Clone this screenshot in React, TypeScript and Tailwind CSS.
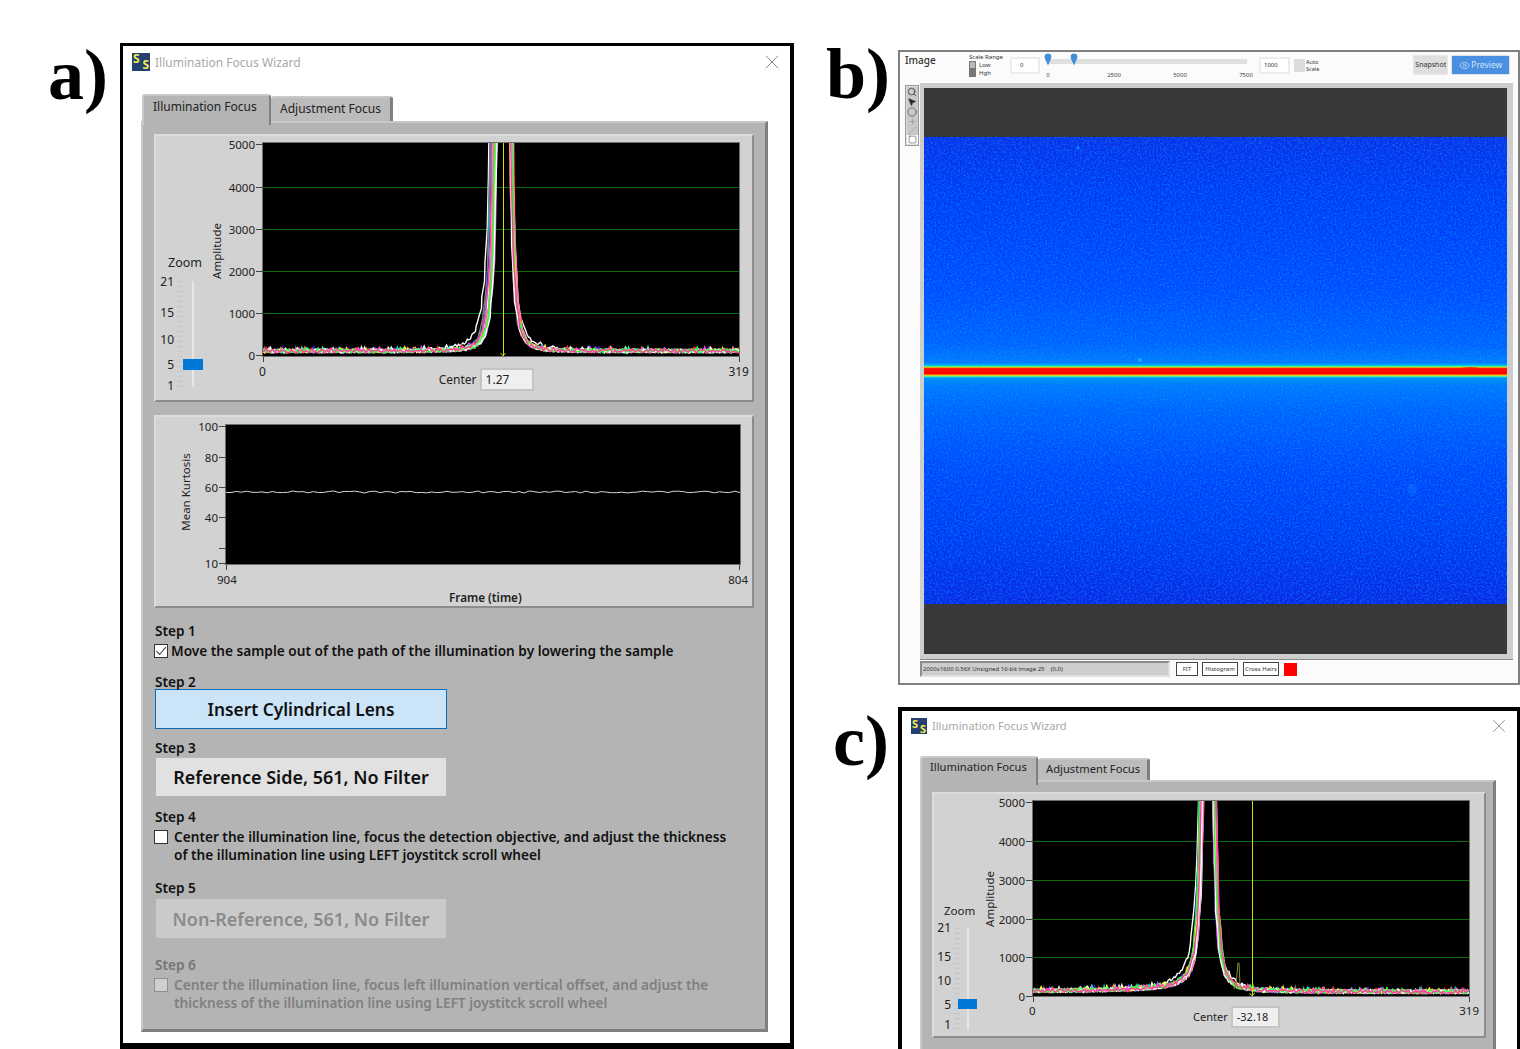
import { Circle, Eye, MousePointer2, Plus, Search, Slash, Square, X } from "lucide-react";

type PeakOpts = {
  seed: number;
  w: number;
  h: number;
  baseY: number;
  scale: number;
  leftFlanks: number[];
  rightFlanks: number[];
  tail: number;
};

const colors = ["#ffffff", "#00c8c8", "#808080", "#2a2aff", "#a050ff", "#00c8ff", "#ff2a2a", "#ff9020", "#ff40ff", "#ffffff", "#ffff30", "#40ff90", "#ff6fa8", "#ffffff", "#30ff30", "#ff40a0"];

function rng(seed: number) {
  let a = seed;
  return () => {
    a = (a + 0x6d2b79f5) | 0;
    let t = Math.imul(a ^ (a >>> 15), 1 | a);
    t = (t + Math.imul(t ^ (t >>> 7), 61 | t)) ^ t;
    return ((t ^ (t >>> 14)) >>> 0) / 4294967296;
  };
}

function peakCurves(o: PeakOpts) {
  return colors.map((color, n) => {
    const r = rng(o.seed + n * 31);
    const cL = o.leftFlanks[n % o.leftFlanks.length] + 8;
    const cR = o.rightFlanks[n % o.rightFlanks.length] - 8;
    const p = n === 0 ? 2.3 : 2.9;
    const k = 5000 * Math.pow(8, p);
    const pts: string[] = [];
    for (let i = 0; i <= 319; i++) {
      const x = (i * o.w) / 319;
      let v = 9000;
      if (x < cL) v = k / Math.pow(cL - x, p) + o.tail / (cL - x);
      else if (x > cR) v = k / Math.pow(x - cR, p) + (o.tail * 0.3) / (x - cR);
      const spike = r() > 0.95 ? 2.4 : 0;
      const y = o.baseY - Math.min(v, 9000) * o.scale + (r() - 0.5) * 3.6 - spike;
      // flanks wobble sideways a little, as the sampled traces do
      const px = v > 400 ? x + (r() - 0.5) * 1.4 : x;
      pts.push(`${px.toFixed(1)},${y.toFixed(1)}`);
    }
    return { color, points: pts.join(" ") };
  });
}

const curvesA = peakCurves({ seed: 11, w: 476, h: 213, baseY: 208, scale: 0.0426, leftFlanks: [226, 228, 227, 229, 230, 231, 232, 233, 234, 230, 232, 233, 231, 234, 232, 229], rightFlanks: [248, 249, 247, 250, 248, 249, 250, 247, 248, 250, 249, 248, 250, 247, 249, 248], tail: 0 });
const curvesC = peakCurves({ seed: 47, w: 436, h: 195, baseY: 191, scale: 0.039, leftFlanks: [166, 168, 169, 167, 170, 171, 169, 168, 170, 171, 168, 169, 171, 170, 167, 169], rightFlanks: [180, 181, 182, 180, 183, 182, 181, 183, 180, 182, 181, 183, 182, 180, 181, 183], tail: 5400 });

function kurtosisLine() {
  const r = rng(5);
  const pts: string[] = [];
  for (let i = 0; i <= 100; i++) {
    pts.push(`${((i * 514) / 100).toFixed(1)},${(67 + (r() - 0.5) * 2).toFixed(1)}`);
  }
  return pts.join(" ");
}
const kurtosisPoints = kurtosisLine();

type Tick = { label: string; y: number };

function AxisPlot({
  width,
  height,
  left,
  top,
  plotW,
  plotH,
  ticks,
  axisLabel,
  axisX,
  axisY,
  xTicks,
  textClass,
  children,
}: {
  width: number;
  height: number;
  left: number;
  top: number;
  plotW: number;
  plotH: number;
  ticks: Tick[];
  axisLabel: string;
  axisX: number;
  axisY: number;
  xTicks: number[];
  textClass: string;
  children: React.ReactNode;
}) {
  return (
    <svg width={width} height={height} className="block shrink-0">
      <rect x={left} y={top} width={plotW} height={plotH} fill="#000" />
      <rect x={left - 0.5} y={top - 0.5} width={plotW + 1} height={plotH + 1} fill="none" stroke="#6e6e6e" />
      {ticks.map((t) => (
        <g key={t.label + t.y}>
          <line x1={left - 7} x2={left} y1={t.y} y2={t.y} stroke="#444" shapeRendering="crispEdges" />
          {t.label && (
            <text x={left - 8} y={t.y + 4.5} textAnchor="end" className={textClass}>
              {t.label}
            </text>
          )}
        </g>
      ))}
      {xTicks.map((x) => (
        <line key={x} x1={x} x2={x} y1={top + plotH + 1} y2={top + plotH + 6} stroke="#444" shapeRendering="crispEdges" />
      ))}
      <text transform={`translate(${axisX} ${axisY}) rotate(-90)`} textAnchor="middle" className={textClass}>
        {axisLabel}
      </text>
      <svg x={left} y={top} width={plotW} height={plotH}>
        {children}
      </svg>
    </svg>
  );
}

function Peaks({ curves, w, h, cursor, grid }: { curves: { color: string; points: string }[]; w: number; h: number; cursor: number; grid: number[] }) {
  return (
    <>
      {grid.map((y) => (
        <rect key={y} x={0} y={y} width={w} height={1} fill="#0a6e0a" />
      ))}
      {curves.map((c, i) => (
        <polyline key={i} points={c.points} fill="none" stroke={c.color} strokeWidth={1.4} />
      ))}
      <line x1={cursor} x2={cursor} y1={0} y2={h} stroke="#dcdc00" shapeRendering="crispEdges" />
      <path d={`M${cursor - 2.5} ${h - 3}L${cursor} ${h}L${cursor + 2.5} ${h - 3}`} fill="none" stroke="#d6d600" />
    </>
  );
}

function SSIcon({ className }: { className: string }) {
  return (
    <div className={"flex justify-between bg-[#24406e] px-px font-bold leading-none text-[#f4ec4e] " + className}>
      <span className="self-start">S</span>
      <span className="self-end">S</span>
    </div>
  );
}

function SliderScale({
  labels,
  labelW,
  trackOffset,
  trackH,
  trackMl,
  thumbTop,
  thumbCls,
}: {
  labels: { v: string; cls: string }[];
  labelW: string;
  trackOffset: string;
  trackH: string;
  trackMl: string;
  thumbTop: string;
  thumbCls: string;
}) {
  return (
    <div className="flex">
      <div className={"flex flex-col items-end text-[12px] leading-[14px] text-[#222] " + labelW}>
        {labels.map((l) => (
          <span key={l.v} className={l.cls}>
            {l.v}
          </span>
        ))}
      </div>
      <div className={"ml-[3px] w-[6px] bg-[repeating-linear-gradient(#c6c6c6_0_1px,transparent_1px_5px)] " + trackOffset + " " + trackH} />
      <div className={"relative w-[2px] bg-[#e6e6e6] " + trackOffset + " " + trackH + " " + trackMl}>
        <div className={"absolute bg-[#0078d7] " + thumbTop + " " + thumbCls} />
      </div>
    </div>
  );
}

function Titlebar({ size, iconCls, textCls, closeMr }: { size: number; iconCls: string; textCls: string; closeMr: string }) {
  return (
    <div className="flex items-center pl-[9px]">
      <SSIcon className={iconCls} />
      <span className={"ml-[5px] text-[#a8a8a8] " + textCls}>Illumination Focus Wizard</span>
      <X size={size} strokeWidth={1} className={"-my-[4px] ml-auto text-[#8c8c8c] " + closeMr} />
    </div>
  );
}

const tabActive = "relative z-10 rounded-t-[3px] border-t-2 border-l-2 border-r-2 border-t-[#c8c8c8] border-l-[#c8c8c8] border-r-[#7f7f7f] bg-[#b4b4b4] text-[#222]";
const tabIdle = "rounded-t-[3px] border-t-2 border-r-[3px] border-t-[#c8c8c8] border-r-[#7f7f7f] bg-[#bcbcbc] text-[#222]";
const chartPanel = "shrink-0 border-2 border-t-[#dcdcdc] border-l-[#dcdcdc] border-r-[#8c8c8c] border-b-[#8c8c8c] bg-[#d2d2d2]";
const tabBody = "border-t-2 border-l-2 border-r-[3px] border-t-[#c8c8c8] border-l-[#c8c8c8] border-r-[#7f7f7f] bg-[#b4b4b4]";
const inputBox = "border-2 border-[#c4c4c4] bg-[#efefef] text-[#222]";

function FigureLabel({ text, className }: { text: string; className: string }) {
  return <div className={"font-['Liberation_Serif',serif] text-[72px] leading-none font-bold text-black " + className}>{text}</div>;
}

function CheckBox({ checked, disabled }: { checked?: boolean; disabled?: boolean }) {
  return (
    <div className={"flex h-[14px] w-[14px] shrink-0 items-center justify-center border " + (disabled ? "border-[#8e8e8e] bg-[#cfcfcf]" : "border-[#333] bg-white")}>
      {checked && (
        <svg width="12" height="12" viewBox="0 0 12 12">
          <path d="M1.5 6.2L4.6 9.5L10.8 2.2" fill="none" stroke="#444" strokeWidth="1.1" />
        </svg>
      )}
    </div>
  );
}

function PanelA() {
  return (
    <div className="mt-[43px] h-[1006px] w-[674px] shrink-0 border-t-[3px] border-r-4 border-b-[6px] border-l-[3px] border-black bg-white">
      <div className="pt-[6px]">
        <Titlebar size={24} iconCls="h-[18px] w-[18px] text-[12px]" textCls="mt-[2px] text-[12px]" closeMr="mr-[6px]" />
      </div>
      <div className="ml-[18px] mt-[22px] flex h-[27px] text-[12px]">
        <div className={"ml-px h-[31px] w-[129px] pt-[2px] pl-[9px] " + tabActive}>Illumination Focus</div>
        <div className={"mt-[2px] h-[25px] w-[122px] pt-[2px] pl-[9px] " + tabIdle}>Adjustment Focus</div>
      </div>
      <div className={"ml-[18px] h-[911px] w-[627px] border-b-[3px] border-b-[#7f7f7f] px-[11px] pt-[11px] " + tabBody}>
        <div className={"flex h-[268px] w-[600px] " + chartPanel}>
          <div className="w-[51px] shrink-0">
            <div className="mt-[118px] pl-[12px] text-[12.5px] leading-[18px] text-[#222]">Zoom</div>
            <div className="mt-[2px]">
              <SliderScale
                labels={[
                  { v: "21", cls: "mt-px" },
                  { v: "15", cls: "mt-[17px]" },
                  { v: "10", cls: "mt-[13px]" },
                  { v: "5", cls: "mt-[11px]" },
                  { v: "1", cls: "mt-[7px]" },
                ]}
                labelW="w-[18px]"
                trackOffset="mt-[7px]"
                trackH="h-[106px]"
                trackMl="ml-[9px]"
                thumbTop="top-[78px]"
                thumbCls="-left-[9px] h-[11px] w-[20px]"
              />
            </div>
          </div>
          <div>
            <AxisPlot
              width={541}
              height={227}
              left={56}
              top={7}
              plotW={476}
              plotH={213}
              axisLabel="Amplitude"
              axisX={14}
              axisY={115}
              ticks={[
                { label: "5000", y: 8 },
                { label: "4000", y: 51 },
                { label: "3000", y: 93 },
                { label: "2000", y: 135 },
                { label: "1000", y: 177 },
                { label: "0", y: 219 },
              ]}
              xTicks={[56, 532]}
              textClass="fill-[#222] text-[11.5px]"
            >
              <Peaks curves={curvesA} w={476} h={213} cursor={240} grid={[44, 86, 128, 170]} />
            </AxisPlot>
            <div className="flex w-[542px] justify-between pl-[52px] text-[12px] leading-[18px] text-[#222]">
              <span>0</span>
              <div className="mt-[5px] mr-[22px] flex items-center">
                <span>Center</span>
                <div className={"ml-[3px] h-[23px] w-[54px] pl-[4px] leading-[19px] " + inputBox}>1.27</div>
              </div>
              <span>319</span>
            </div>
          </div>
        </div>
        <div className={"mt-[13px] flex h-[193px] w-[600px] " + chartPanel}>
          <div>
            <AxisPlot
              width={590}
              height={154}
              left={70}
              top={8}
              plotW={514}
              plotH={139}
              axisLabel="Mean Kurtosis"
              axisX={34}
              axisY={75}
              ticks={[
                { label: "100", y: 9 },
                { label: "80", y: 40 },
                { label: "60", y: 70 },
                { label: "40", y: 100 },
                { label: "", y: 131 },
                { label: "10", y: 146 },
              ]}
              xTicks={[70, 583]}
              textClass="fill-[#222] text-[11.5px]"
            >
              <polyline points={kurtosisPoints} fill="none" stroke="#d8d8d8" strokeWidth={1} />
            </AxisPlot>
            <div className="flex w-[592px] justify-between pl-[61px] text-[11.5px] leading-[18px] text-[#222]">
              <span>904</span>
              <span>804</span>
            </div>
            <div className="pl-[293px] text-[11.7px] leading-[16px] font-semibold text-[#222]">Frame (time)</div>
          </div>
        </div>
        <div className="text-[13.65px] leading-[18px] font-semibold text-[#111]">
          <div className="mt-[16px] ml-px leading-[14px]">Step 1</div>
          <div className="mt-[4px] flex items-center gap-[3px]">
            <CheckBox checked />
            <span>Move the sample out of the path of the illumination by lowering the sample</span>
          </div>
          <div className="mt-[15px] ml-px leading-[14px]">Step 2</div>
          <div className="ml-px flex h-[40px] w-[292px] items-center justify-center border-[1.5px] border-[#0a6cbc] bg-[#cce4f7] pt-[2px] text-[17.3px]">Insert Cylindrical Lens</div>
          <div className="mt-[12px] ml-px leading-[14px]">Step 3</div>
          <div className="mt-[3px] ml-[2px] flex h-[38px] w-[290px] items-center justify-center bg-[#e1e1e1] text-[18px]">Reference Side, 561, No Filter</div>
          <div className="mt-[14px] ml-px leading-[14px]">Step 4</div>
          <div className="mt-[4px] flex gap-[6px]">
            <div className="mt-[2px]">
              <CheckBox />
            </div>
            <span>
              Center the illumination line, focus the detection objective, and adjust the thickness
              <br />
              of the illumination line using LEFT joystitck scroll wheel
            </span>
          </div>
          <div className="mt-[17px] ml-px leading-[14px]">Step 5</div>
          <div className="mt-[4px] ml-[2px] flex h-[39px] w-[290px] items-center justify-center bg-[#cacaca] pt-px text-[18px] text-[#8a8a8a]">Non-Reference, 561, No Filter</div>
          <div className="mt-[20px] ml-px leading-[14px] text-[#767676]">Step 6</div>
          <div className="mt-[4px] flex gap-[6px] text-[#808080]">
            <div className="mt-[2px]">
              <CheckBox disabled />
            </div>
            <span>
              Center the illumination line, focus left illumination vertical offset, and adjust the
              <br />
              thickness of the illumination line using LEFT joystitck scroll wheel
            </span>
          </div>
        </div>
      </div>
    </div>
  );
}

const blueStops: [number, string][] = [
  [137, "#0a2ce8"],
  [200, "#0038f8"],
  [290, "#0048ff"],
  [345, "#0060ff"],
  [362, "#0078ff"],
  [365, "#00a8ff"],
  [366, "#00e8d0"],
  [367, "#c0f020"],
  [368, "#ff6000"],
  [368.6, "#ff1000"],
  [374, "#ff0000"],
  [375, "#ffb000"],
  [376, "#a0f050"],
  [377, "#10e0e0"],
  [378, "#0090ff"],
  [385, "#0078ff"],
  [410, "#0060ff"],
  [470, "#0044fc"],
  [540, "#0036f2"],
  [604, "#0a24e4"],
];

function LineImage() {
  return (
    <svg width={583} height={467} className="block">
      <defs>
        <linearGradient id="beam" x1="0" y1="0" x2="0" y2="1">
          {blueStops.map(([y, c]) => (
            <stop key={y} offset={(y - 137) / 467} stopColor={c} />
          ))}
        </linearGradient>
        <filter id="speckle" x="0" y="0" width="100%" height="100%">
          <feTurbulence type="fractalNoise" baseFrequency="0.55" numOctaves="2" seed="4" />
          <feColorMatrix type="matrix" values="0 0 0 0 0  0 0 0 0 0.4  0 0 0 0 1  1.1 0 0 0 -0.42" />
        </filter>
      </defs>
      <rect width={583} height={467} fill="url(#beam)" />
      <rect width={583} height={225} filter="url(#speckle)" />
      <rect y={242} width={583} height={225} filter="url(#speckle)" />
      <circle cx={154} cy={11} r={1.5} fill="#0a90ff" />
      <circle cx={216} cy={223} r={2} fill="#10b0ff" />
      <circle cx={488} cy={352} r={5} fill="#1070ff" opacity={0.5} />
      <path d="M535 231.5Q546 229 558 231.5Z" fill="#ff1000" />
    </svg>
  );
}

function ToolPalette() {
  const cell = "flex h-[10px] w-[11px] items-center justify-center bg-[#c9c9c9] text-[#333]";
  return (
    <div className="mt-[2px] flex h-[61px] w-[14px] flex-col items-center border border-[#9a9a9a] bg-[#dedede] py-px">
      <div className={cell}>
        <Search size={10} strokeWidth={1.8} />
      </div>
      <div className={cell}>
        <MousePointer2 size={10} fill="#222" strokeWidth={1.2} />
      </div>
      <div className={cell}>
        <Circle size={10} strokeWidth={1.4} />
      </div>
      <div className={cell + " text-[#888]"}>
        <Plus size={9} strokeWidth={1.4} />
      </div>
      <div className={cell + " text-[#888]"}>
        <Slash size={9} strokeWidth={1.2} />
      </div>
      <div className="flex h-[10px] w-[11px] items-center justify-center bg-white text-[#333]">
        <Square size={9} strokeWidth={1.4} />
      </div>
    </div>
  );
}

function ScaleThumb({ className }: { className: string }) {
  return (
    <svg width="8" height="13" viewBox="0 0 8 13" className={"absolute -top-[6px] " + className}>
      <path d="M0.6 3.6C0.6 1.6 2.1 0.4 4 0.4S7.4 1.6 7.4 3.6C7.4 6.4 5 9.8 4 12.6C3 9.8 0.6 6.4 0.6 3.6Z" fill="#3f8fdc" />
    </svg>
  );
}

function PanelB() {
  const small = "border border-[#444] bg-white flex items-center justify-center text-[6px] h-[14px] text-[#333]";
  return (
    <div className="h-[635px] w-[622px] shrink-0 border-2 border-[#808080] bg-[#fbfbfb]">
      <div className="flex h-[31px] items-start text-[#333]">
        <div className="ml-[5px] w-[64px] text-[10px] leading-[16px] font-medium">Image</div>
        <div className="mt-[2px] w-[41px] text-[6px] leading-[7px]">
          <div>Scale Range</div>
          <div className="flex">
            <div className="flex flex-col">
              <div className="h-[8px] w-[7px] border border-[#777] bg-[#bbb]" />
              <div className="h-[8px] w-[7px] bg-[#777]" />
            </div>
            <div className="ml-[3px] leading-[8px]">
              Low
              <br />
              Hgh
            </div>
          </div>
        </div>
        <div className="mt-[5px] h-[17px] w-[30px] border-2 border-[#ececec] bg-white pl-[8px] text-[6px] leading-[13px]">0</div>
        <div className="mt-[7px] ml-[7px] w-[200px]">
          <div className="relative h-[5px] bg-[#e0e0e0]">
            <ScaleThumb className="-left-[3px]" />
            <ScaleThumb className="left-[23px]" />
          </div>
          <div className="mt-[7px] -ml-[32px] flex text-[6px] leading-[8px] text-[#444]">
            <span className="w-[66px] shrink-0 text-center">0</span>
            <span className="w-[66px] shrink-0 text-center">2500</span>
            <span className="w-[66px] shrink-0 text-center">5000</span>
            <span className="w-[66px] shrink-0 text-center">7500</span>
          </div>
        </div>
        <div className="mt-[5px] ml-[12px] h-[17px] w-[31px] border-2 border-[#ececec] bg-white pl-[3px] text-[6px] leading-[13px]">1000</div>
        <div className="mt-[7px] ml-[4px] h-[13px] w-[11px] bg-[#dcdcdc]" />
        <div className="mt-[7px] ml-px text-[5.5px] leading-[7px]">
          Auto
          <br />
          Scale
        </div>
        <div className="mt-[4px] ml-[95px] flex h-[18px] w-[33px] items-center justify-center bg-[#dfdfdf] text-[7px] shadow-[0_0_1px_#888]">Snapshot</div>
        <div className="mt-[4px] ml-[5px] flex h-[18px] w-[57px] items-center justify-center gap-px bg-[#4a90e2] text-[8.5px] text-[#cfe4f8] shadow-[0_0_1px_#666]">
          <Eye size={11} strokeWidth={1.5} />
          Preview
        </div>
      </div>
      <div className="flex pl-[5px]">
        <ToolPalette />
        <div className="ml-px w-[593px] border-[5px] border-r-[6px] border-l-4 border-[#cdcdcd] shadow-[0_1px_0_#8a8a8a]">
          <div className="h-[49px] bg-[#383838]" />
          <LineImage />
          <div className="h-[50px] bg-[#383838]" />
        </div>
      </div>
      <div className="mt-[2px] ml-[20px] flex items-center">
        <div className="flex h-[16px] w-[250px] items-center border-2 border-t-[#8c8c8c] border-r-[#e0e0e0] border-b-[#e0e0e0] border-l-[#8c8c8c] bg-[#cdcdcd] pl-px text-[6px] text-[#333]">2000x1600 0.56X Unsigned 16-bit image 25 &nbsp; &nbsp;(0,0)</div>
        <div className={"ml-[6px] w-[22px] " + small}>FIT</div>
        <div className={"ml-[4px] w-[36px] " + small}>Histogram</div>
        <div className={"ml-[5px] w-[36px] " + small}>Cross Hairs</div>
        <div className="ml-[5px] h-[13px] w-[13px] bg-[#ff0000]" />
      </div>
    </div>
  );
}

function PanelC() {
  return (
    <div className="h-[342px] w-[622px] shrink-0 overflow-hidden border-t-4 border-r-[3px] border-l-4 border-black bg-white">
      <div className="pt-[7px]">
        <Titlebar size={22} iconCls="h-[16px] w-[16px] text-[11px]" textCls="text-[11.1px]" closeMr="mr-[7px]" />
      </div>
      <div className="ml-[18px] mt-[21px] flex h-[24px] text-[11.2px]">
        <div className={"h-[29px] w-[118px] pt-px pl-[8px] " + tabActive}>Illumination Focus</div>
        <div className={"mt-[2px] h-[22px] w-[112px] pt-px pl-[8px] " + tabIdle}>Adjustment Focus</div>
      </div>
      <div className={"ml-[18px] h-[300px] w-[576px] px-[10px] pt-[10px] " + tabBody}>
        <div className={"flex h-[246px] w-[554px] " + chartPanel}>
          <div className="w-[49px] shrink-0">
            <div className="mt-[108px] pl-[10px] text-[11.5px] leading-[18px] text-[#222]">Zoom</div>
            <div>
              <SliderScale
                labels={[
                  { v: "21", cls: "mt-px" },
                  { v: "15", cls: "mt-[15px]" },
                  { v: "10", cls: "mt-[10px]" },
                  { v: "5", cls: "mt-[10px]" },
                  { v: "1", cls: "mt-[6px]" },
                ]}
                labelW="w-[17px]"
                trackOffset="mt-[8px]"
                trackH="h-[102px]"
                trackMl="ml-[7px]"
                thumbTop="top-[71px]"
                thumbCls="-left-[9px] h-[10px] w-[19px]"
              />
            </div>
          </div>
          <div>
            <AxisPlot
              width={496}
              height={208}
              left={50}
              top={7}
              plotW={436}
              plotH={195}
              axisLabel="Amplitude"
              axisX={11}
              axisY={105}
              ticks={[
                { label: "5000", y: 8 },
                { label: "4000", y: 47 },
                { label: "3000", y: 86 },
                { label: "2000", y: 125 },
                { label: "1000", y: 163 },
                { label: "0", y: 202 },
              ]}
              xTicks={[50, 486]}
              textClass="fill-[#222] text-[11.5px]"
            >
              <Peaks curves={curvesC} w={436} h={195} cursor={219} grid={[40, 79, 118, 156]} />
              <polyline points="201,188 203,184 205,162 206,162 207,184 209,189" fill="none" stroke="#8a8a30" />
            </AxisPlot>
            <div className="flex w-[496px] justify-between pl-[46px] text-[11.5px] leading-[18px] text-[#222]">
              <span>0</span>
              <div className="mt-[4px] mr-[22px] flex items-center text-[11px]">
                <span>Center</span>
                <div className={"ml-[3px] h-[22px] w-[49px] pl-[4px] leading-[18px] " + inputBox}>-32.18</div>
              </div>
              <span>319</span>
            </div>
          </div>
        </div>
      </div>
    </div>
  );
}

export default function App() {
  return (
    <div className="flex h-[1049px] w-[1520px] overflow-hidden bg-white font-['Noto_Sans',sans-serif]">
      <div className="w-[120px] shrink-0 pl-[48px]">
        <FigureLabel text="a)" className="mt-[39px]" />
      </div>
      <PanelA />
      <div className="flex-1">
        <div className="mt-[50px] flex">
          <div className="w-[104px] shrink-0 pl-[32px]">
            <FigureLabel text="b)" className="-mt-[12px]" />
          </div>
          <PanelB />
        </div>
        <div className="mt-[22px] flex">
          <div className="w-[104px] shrink-0 pl-[39px]">
            <FigureLabel text="c)" className="-mt-[2px]" />
          </div>
          <PanelC />
        </div>
      </div>
    </div>
  );
}
